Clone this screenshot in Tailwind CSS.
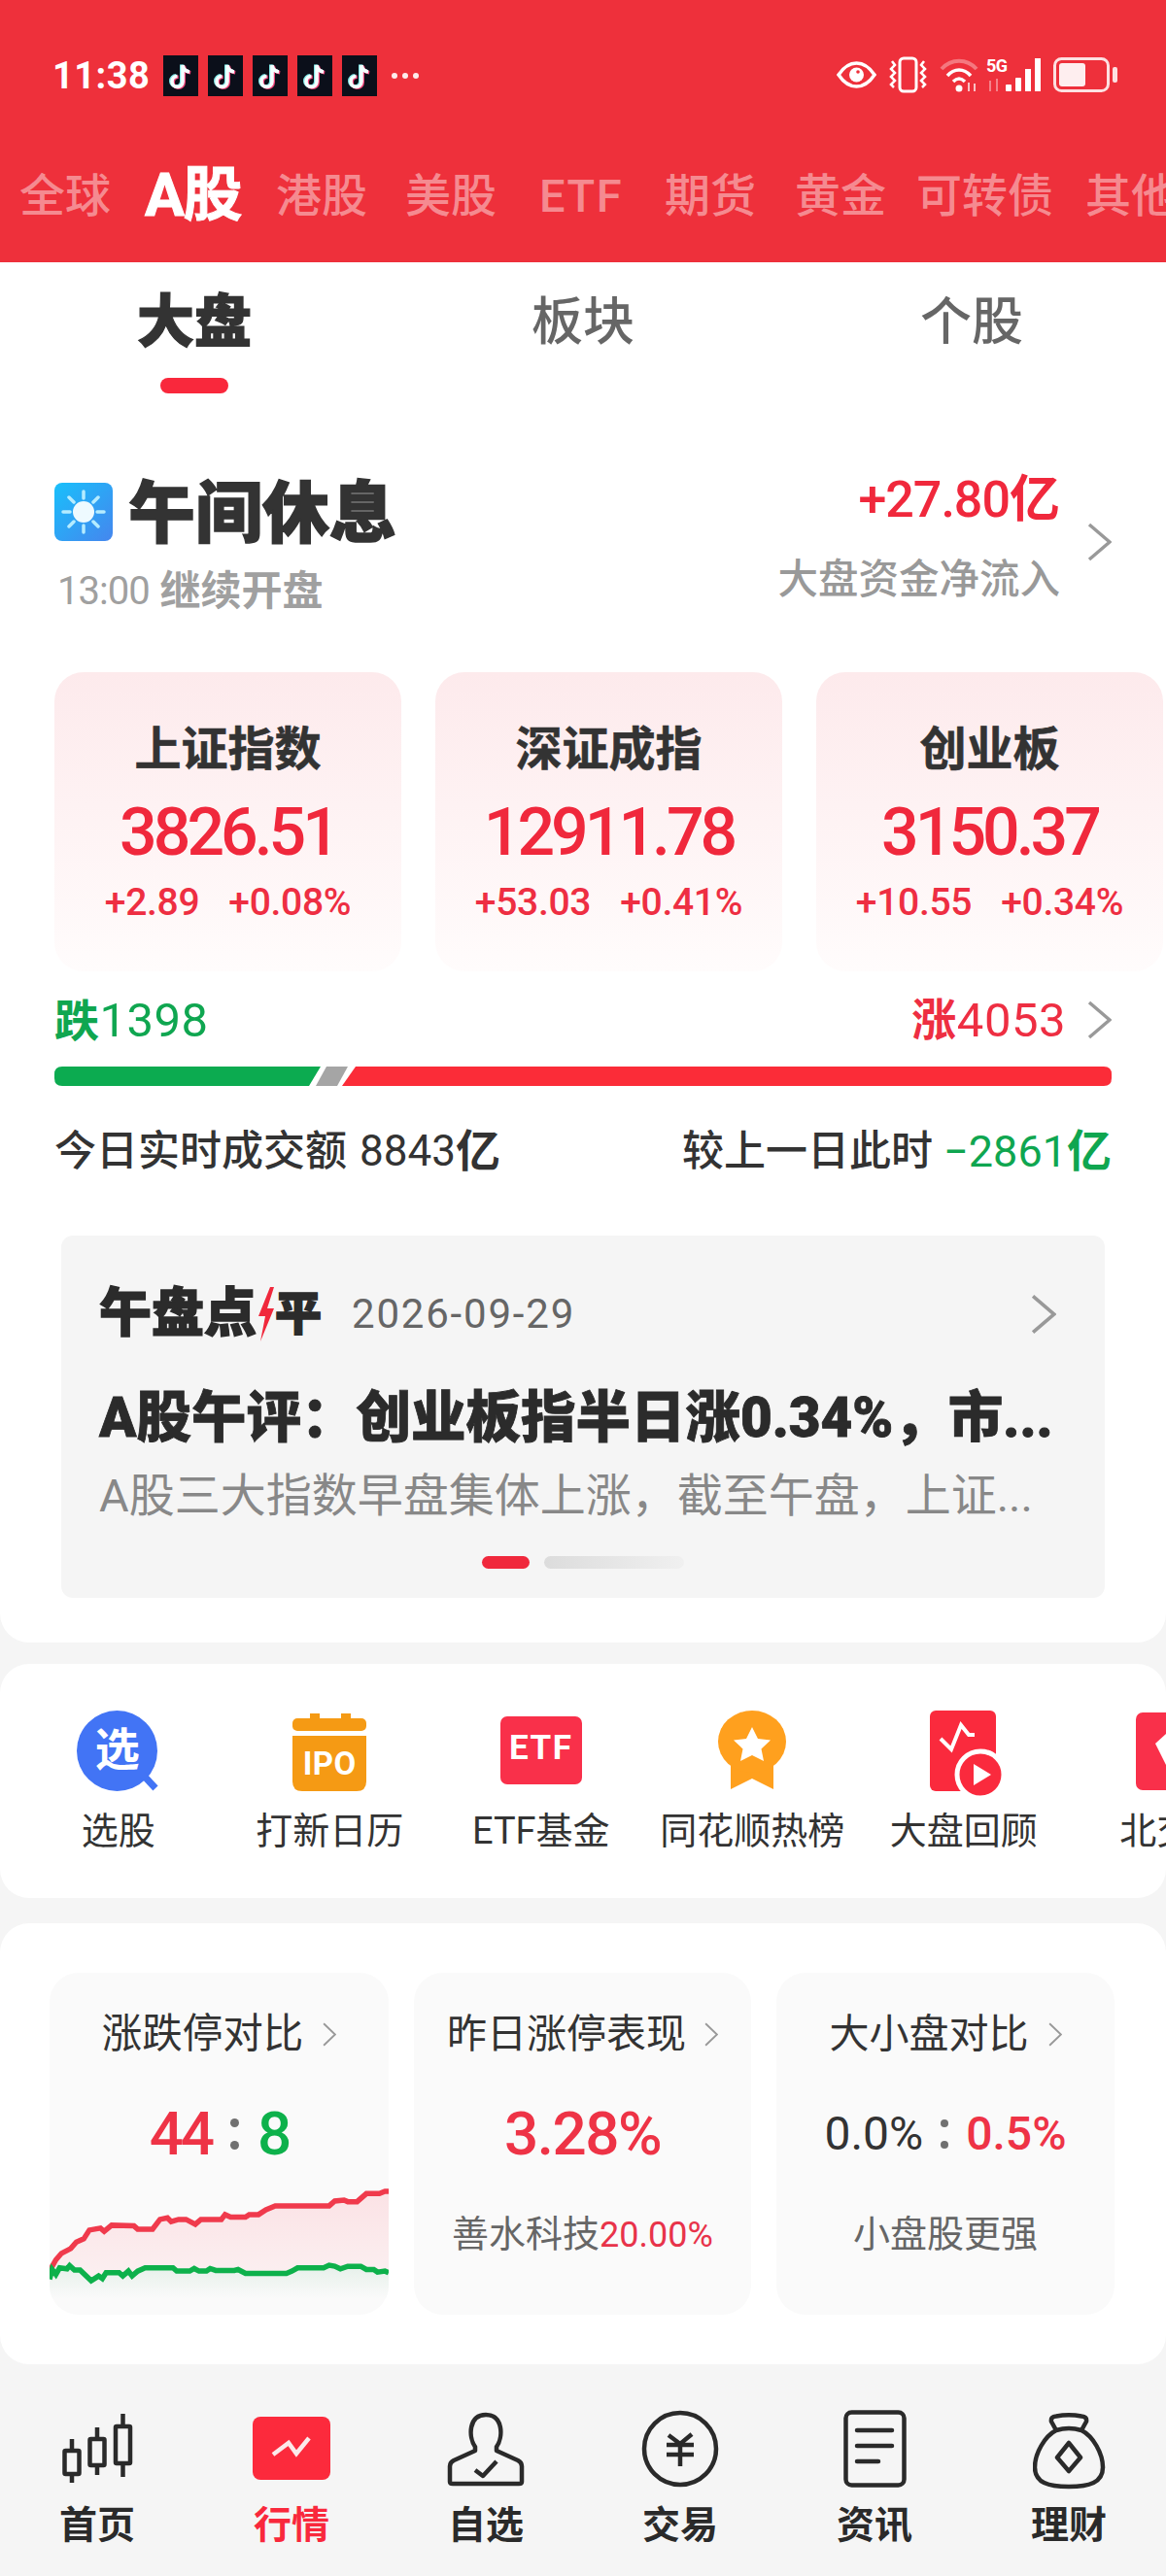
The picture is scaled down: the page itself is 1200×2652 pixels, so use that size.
<!DOCTYPE html>
<html lang="zh-CN">
<head>
<meta charset="UTF-8">
<title>行情</title>
<script src="https://cdn.jsdelivr.net/npm/@tailwindcss/browser@4"></script>
</head>
<body class="bg-[#f5f5f5]">
<svg class="hidden">
  <symbol id="tt" viewBox="0 0 36 42">
    <rect width="36" height="42" fill="#0b0f1a"/>
    <g fill="none" stroke-width="3.6">
      <path transform="translate(-1.2 -.6)" d="M20 10V27a5.5 5.5 0 1 1-5.5-5.5M20 10c.5 4 3 6.500 7 7" stroke="#7fe6e6"/>
      <path transform="translate(1.200 .8)" d="M20 10V27a5.500 5.500 0 1 1-5.500-5.500M20 10c.5 4 3 6.500 7 7" stroke="#f0447a"/>
      <path d="M20 10V27a5.500 5.500 0 1 1-5.500-5.500M20 10c.5 4 3 6.500 7 7" stroke="#f4ffff"/>
    </g>
  </symbol>
  <symbol id="chev" viewBox="0 0 25 40"><path d="M2 2 23 20 2 38" fill="none" stroke="#999" stroke-width="3.500"/></symbol>
</svg>

<div class="w-[1200px] h-[2652px] overflow-hidden font-['Roboto','Noto_Sans_CJK_SC',sans-serif] text-[#333]">

  <!-- red header -->
  <header class="h-[270px] bg-[#ee303b] overflow-hidden">
    <div class="h-[173px] flex pt-[57px] pl-[54px] pr-[50px] justify-between items-start">
      <div class="flex items-center h-[42px] text-white">
        <span class="text-[38px] font-bold leading-none w-[114px] tracking-[.5px]">11:38</span>
        <div class="flex gap-[10px]">
          <svg class="w-[36px] h-[42px]"><use href="#tt"/></svg>
          <svg class="w-[36px] h-[42px]"><use href="#tt"/></svg>
          <svg class="w-[36px] h-[42px]"><use href="#tt"/></svg>
          <svg class="w-[36px] h-[42px]"><use href="#tt"/></svg>
          <svg class="w-[36px] h-[42px]"><use href="#tt"/></svg>
        </div>
        <div class="flex gap-[5px] ml-[15px]">
          <span class="w-[6px] h-[6px] rounded-full bg-white/90"></span>
          <span class="w-[6px] h-[6px] rounded-full bg-white/90"></span>
          <span class="w-[6px] h-[6px] rounded-full bg-white/90"></span>
        </div>
      </div>
      <div class="flex items-center h-[38px] mt-[1px]">
        <svg class="w-[41px] h-[28px]" viewBox="0 0 41 28">
          <path d="M2 14C8 5 14 2 20.500 2S33 5 39 14C33 23 27 26 20.500 26S8 23 2 14Z" fill="none" stroke="#fff" stroke-width="3.500"/>
          <circle cx="20.500" cy="14" r="7.500" fill="#fff"/>
          <circle cx="22" cy="11" r="1.800" fill="#ee303b"/>
        </svg>
        <svg class="w-[42px] h-[38px] ml-[12px]" viewBox="0 0 42 38" fill="none" stroke="#fff" stroke-width="2.500">
          <rect x="12" y="2" width="17" height="34" rx="4" stroke-width="3"/>
          <path d="M4 5l3 4-4 4 4 4-4 4 4 4-4 4 3 3M37 5l-3 4 4 4-4 4 4 4-4 4 4 4-3 3"/>
        </svg>
        <svg class="w-[40px] h-[36px] ml-[11px]" viewBox="0 0 40 36" fill="none">
          <path d="M2 12C12 1 28 1 38 12" stroke="#fff" stroke-opacity=".35" stroke-width="4"/>
          <path d="M8 19C15 11 25 11 32 19M14 25c4-4 8-4 12 0" stroke="#fff" stroke-width="3.500"/>
          <circle cx="20" cy="32" r="3.500" fill="#fff"/>
          <path d="M30 26v9M36 27v8" stroke="#fff" stroke-opacity=".7" stroke-width="2"/>
        </svg>
        <div class="relative w-[64px] h-[36px] ml-[8px]">
          <span class="absolute left-0 top-0 text-[18px] font-bold leading-none text-white tracking-[-.5px]">5G</span>
          <svg class="absolute left-0 top-0 w-[64px] h-[36px]" viewBox="0 0 64 36" fill="#fff">
            <path d="M4 24v11M11 22v13" stroke="#fff" stroke-opacity=".4" stroke-width="2"/>
            <rect x="20" y="28" width="6" height="7" rx="1"/><rect x="30" y="21" width="6" height="14" rx="1"/><rect x="40" y="12" width="6" height="23"/><rect x="50" y="1" width="6" height="34"/>
          </svg>
        </div>
        <svg class="w-[66px] h-[36px] ml-[5px]" viewBox="0 0 66 36">
          <rect x="1.500" y="1.500" width="55" height="33" rx="7" fill="none" stroke="#fff" stroke-opacity=".85" stroke-width="3"/>
          <rect x="6" y="6" width="27" height="24" rx="3" fill="#fff" fill-opacity=".92"/>
          <rect x="61" y="10" width="5" height="16" rx="2" fill="#fff" fill-opacity=".85"/>
        </svg>
      </div>
    </div>
    <nav class="flex items-center h-[58px] pl-[20px] whitespace-nowrap text-[47px] font-medium leading-none text-white/45 -mt-[1px]">
      <span>全球</span>
      <span class="ml-[35px] text-[61px] font-bold text-white tracking-[-1.500px] [-webkit-text-stroke:1px_#fff]">A股</span>
      <span class="ml-[36px]">港股</span>
      <span class="ml-[39px]">美股</span>
      <span class="ml-[44px] tracking-[1.500px]">ETF</span>
      <span class="ml-[43px]">期货</span>
      <span class="ml-[40px]">黄金</span>
      <span class="ml-[31px]">可转债</span>
      <span class="ml-[33px]">其他</span>
    </nav>
  </header>

  <!-- market overview -->
  <main class="h-[1421px] bg-white rounded-b-[30px]">
    <div class="grid grid-cols-3 h-[135px] pt-[33px]">
      <div class="flex flex-col items-center">
        <span class="text-[59px] font-black leading-[58px] [-webkit-text-stroke:1.200px_#333]">大盘</span>
        <span class="w-[70px] h-[16px] rounded-full bg-[#f9283c] mt-[28px]"></span>
      </div>
      <div class="text-center text-[53px] font-medium leading-[58px] text-[#666]">板块</div>
      <div class="text-center text-[53px] font-medium leading-[58px] text-[#666]">个股</div>
    </div>

    <section class="px-[56px]">
      <div class="flex justify-between pt-[84px] h-[287px]">
        <div>
          <div class="flex items-center h-[70px] mt-[5px]">
            <svg class="w-[60px] h-[60px] -mt-[5px]" viewBox="0 0 60 60">
              <defs><linearGradient id="sky" x1="0" y1="0" x2="1" y2="1"><stop offset="0" stop-color="#19c0fb"/><stop offset="1" stop-color="#4586ee"/></linearGradient></defs>
              <rect width="60" height="60" rx="8" fill="url(#sky)"/>
              <circle cx="30" cy="30" r="11" fill="#eefaff"/>
              <path d="M30 9v7M30 44v7M9 30h7M44 30h7M15 15l5 5M40 40l5 5M45 15l-5 5M20 40l-5 5" stroke="#b5ecff" stroke-width="3.500" stroke-linecap="round"/>
            </svg>
            <span class="ml-[16px] text-[69px] font-black leading-none [-webkit-text-stroke:1.500px_#333]">午间休息</span>
          </div>
          <div class="flex items-center h-[40px] mt-[25px] pl-[3px] text-[#a0a0a0]">
            <span class="text-[40px] leading-none tracking-[-1px]">13:00</span>
            <span class="ml-[11px] text-[42px] font-bold leading-none">继续开盘</span>
          </div>
        </div>
        <div class="flex h-[135px]">
          <div class="text-right -mt-[2px]">
            <div class="text-[#f0283c] text-[52px] font-medium leading-[56px] tracking-[-1px]">+27.80<span class="font-bold tracking-normal">亿</span></div>
            <div class="text-[#999] text-[41.5px] font-medium leading-[44px] mt-[32px]">大盘资金净流入</div>
          </div>
          <svg class="w-[25px] h-[40px] ml-[28px] self-center mb-[-3px]"><use href="#chev"/></svg>
        </div>
      </div>

      <div class="flex gap-[35px] w-[1141px]">
        <div class="w-[357px] h-[308px] rounded-[30px] bg-gradient-to-b from-[#fdeaec] to-[#fffcfc] text-center pt-[52px]">
          <div class="text-[48px] font-bold leading-[56px] [-webkit-text-stroke:.6px_#333]">上证指数</div>
          <div class="text-[68px] font-medium text-[#f0283c] leading-[72px] mt-[21px] tracking-[-4px]">3826.51</div>
          <div class="flex justify-center gap-[30px] text-[39px] font-medium text-[#ee2e42] leading-[40px] mt-[16px] tracking-[-.3px]"><span>+2.89</span><span>+0.08%</span></div>
        </div>
        <div class="w-[357px] h-[308px] rounded-[30px] bg-gradient-to-b from-[#fdeaec] to-[#fffcfc] text-center pt-[52px]">
          <div class="text-[48px] font-bold leading-[56px] [-webkit-text-stroke:.6px_#333]">深证成指</div>
          <div class="text-[68px] font-medium text-[#f0283c] leading-[72px] mt-[21px] tracking-[-4px]">12911.78</div>
          <div class="flex justify-center gap-[30px] text-[39px] font-medium text-[#ee2e42] leading-[40px] mt-[16px] tracking-[-.3px]"><span>+53.03</span><span>+0.41%</span></div>
        </div>
        <div class="w-[357px] h-[308px] rounded-[30px] bg-gradient-to-b from-[#fdeaec] to-[#fffcfc] text-center pt-[52px]">
          <div class="text-[48px] font-bold leading-[56px] [-webkit-text-stroke:.6px_#333]">创业板</div>
          <div class="text-[68px] font-medium text-[#f0283c] leading-[72px] mt-[21px] tracking-[-4px]">3150.37</div>
          <div class="flex justify-center gap-[30px] text-[39px] font-medium text-[#ee2e42] leading-[40px] mt-[16px] tracking-[-.3px]"><span>+10.55</span><span>+0.34%</span></div>
        </div>
      </div>

      <div class="flex justify-between items-center h-[44px] mt-[28px]">
        <div class="text-[#0fa650] text-[49px] leading-none tracking-[.5px]"><span class="font-bold text-[46px]">跌</span>1398</div>
        <div class="flex items-center text-[#ee2e42] text-[49px] leading-none tracking-[.5px]"><span class="font-bold text-[46px]">涨</span>4053<svg class="w-[25px] h-[40px] ml-[22px]"><use href="#chev"/></svg></div>
      </div>
      <svg class="block w-[1088px] h-[20px] mt-[26px]" viewBox="0 0 1088 20">
        <path d="M8 0H274L262 20H8Q0 20 0 12V8Q0 0 8 0Z" fill="#0cab50"/>
        <path d="M280 0H302L291 20H269Z" fill="#a5a5a5"/>
        <path d="M310 0H1080Q1088 0 1088 8V12Q1088 20 1080 20H296Z" fill="#fb2c38"/>
      </svg>

      <div class="flex justify-between items-center h-[44px] mt-[45px] text-[43px] font-medium leading-none">
        <div class="flex items-center">今日实时成交额<span class="ml-[13px] text-[44px] font-normal">8843</span><span class="font-bold text-[46px]">亿</span></div>
        <div class="flex items-center">较上一日此时<span class="ml-[11px] text-[#0fa650] text-[45px] font-normal">−2861</span><span class="font-bold text-[46px] text-[#0fa650]">亿</span></div>
      </div>

      <div class="w-[1074px] h-[373px] ml-[7px] mt-[65px] rounded-[12px] bg-[#f5f5f5] px-[39px] pt-[51px]">
        <div class="flex items-center h-[60px]">
          <div class="flex items-center w-[260px] font-black text-[54px] leading-none text-[#2b2b2b] [-webkit-text-stroke:1.500px_#2b2b2b]">
            <span>午盘点</span>
            <svg class="w-[20px] h-[58px] shrink-0" viewBox="0 0 20 58"><path d="M14 1 2 31h7L4 57 18 23h-7L18 1Z" fill="#f0283c"/></svg>
            <span class="-ml-[1px] text-[48px]">平</span>
          </div>
          <span class="text-[#666] text-[42px] tracking-[1.800px] leading-none">2026-09-29</span>
          <svg class="w-[26px] h-[46px] ml-auto mr-[11px]" viewBox="0 0 25 40"><use href="#chev"/></svg>
        </div>
        <div class="mt-[47px] text-[56.5px] font-black leading-[60px] whitespace-nowrap text-[#2b2b2b] [-webkit-text-stroke:.8px_#2b2b2b]">A股午评：创业板指半日涨0.34%，市...</div>
        <div class="mt-[22px] text-[47px] leading-[56px] whitespace-nowrap text-[#888]">A股三大指数早盘集体上涨，截至午盘，上证...</div>
        <div class="flex justify-center gap-[15px] mt-[34px]">
          <span class="w-[49px] h-[13px] rounded-full bg-[#f0283c]"></span>
          <span class="w-[144px] h-[13px] rounded-full bg-gradient-to-r from-[#dcdcdc] to-[#f0f0f0]"></span>
        </div>
      </div>
    </section>
  </main>

  <!-- shortcut strip -->
  <section class="mt-[22px] h-[241px] bg-white rounded-[30px] pt-[48px] overflow-hidden">
    <div class="flex w-[1400px] pl-[13px]">
      <div class="w-[217.500px] flex flex-col items-center">
        <div class="h-[90px]">
          <div class="relative w-[85px] h-[85px]">
            <div class="absolute left-0 top-0 w-[83px] h-[83px] rounded-full bg-[#4274f5] text-white text-[46px] font-bold leading-[80px] text-center">选</div>
            <svg class="absolute left-0 top-0 w-[85px] h-[85px]" viewBox="0 0 85 85"><path d="M68 66 81 80" stroke="#4274f5" stroke-width="7"/></svg>
          </div>
        </div>
        <div class="mt-[11px] text-[38px] leading-[46px]">选股</div>
      </div>
      <div class="w-[217.500px] flex flex-col items-center">
        <div class="relative h-[90px]">
          <svg class="w-[76px] h-[80px] mt-[3px]" viewBox="0 0 76 80" fill="#f59a14">
            <path d="M18 0h10v5H18zM50 0h10v5H50z"/><rect y="5" width="76" height="13" rx="5"/><path d="M0 23H76V70Q76 80 66 80H10Q0 80 0 70Z"/>
          </svg>
          <span class="absolute left-0 right-0 top-[37px] text-center text-white text-[33px] font-bold leading-[36px] tracking-[.5px]">IPO</span>
        </div>
        <div class="mt-[11px] text-[38px] leading-[46px]">打新日历</div>
      </div>
      <div class="w-[217.500px] flex flex-col items-center">
        <div class="h-[90px]">
          <div class="w-[84px] h-[70px] mt-[6px] rounded-[7px] bg-[#f9304a] text-white text-[35px] font-bold leading-[66px] text-center tracking-[1.500px]">ETF</div>
        </div>
        <div class="mt-[11px] text-[38px] leading-[46px]">ETF基金</div>
      </div>
      <div class="w-[217.500px] flex flex-col items-center">
        <div class="h-[90px]">
          <svg class="w-[70px] h-[82px]" viewBox="0 0 70 82" fill="#ffa01e">
            <path d="M13 50V81L35 70 57 81V50Z"/><ellipse cx="35" cy="32" rx="35" ry="32"/>
            <path d="M35 17l6 12 13 1.500-9.500 9 2.500 12.500L35 46l-12 6 2.500-12.500-9.500-9L29 29Z" fill="#fff"/>
          </svg>
        </div>
        <div class="mt-[11px] text-[38px] leading-[46px]">同花顺热榜</div>
      </div>
      <div class="w-[217.500px] flex flex-col items-center">
        <div class="h-[90px]">
          <svg class="w-[76px] h-[88px] ml-[6px]" viewBox="0 0 76 88">
            <rect width="68" height="83" rx="6" fill="#fa2a3d"/>
            <path d="M11 29 22 40 32 15 40 25H46" fill="none" stroke="#fff" stroke-width="4"/>
            <circle cx="52" cy="66" r="24" fill="#fa2a3d" stroke="#fff" stroke-width="5"/>
            <path d="M45 55 63 66 45 77Z" fill="#fff"/>
          </svg>
        </div>
        <div class="mt-[11px] text-[38px] leading-[46px]">大盘回顾</div>
      </div>
      <div class="w-[217.500px] flex flex-col items-center">
        <div class="h-[90px]">
          <svg class="w-[80px] h-[80px] mt-[2px]" viewBox="0 0 80 80">
            <rect width="80" height="80" rx="7" fill="#f9304a"/>
            <path d="M20 32 32 21 44 32 32 56Z" fill="#fff"/>
          </svg>
        </div>
        <div class="mt-[11px] text-[38px] leading-[46px]">北交所</div>
      </div>
    </div>
  </section>

  <!-- limit-up cards -->
  <section class="mt-[26px] h-[454px] bg-white rounded-[30px] pt-[51px] pl-[51px] flex gap-[26px]">
    <div class="relative w-[349px] h-[352px] rounded-[30px] bg-[#fafafa] overflow-hidden text-center">
      <div class="flex justify-center items-center gap-[20px] pt-[40px] text-[41.5px] leading-[46px]">涨跌停对比<svg class="w-[14px] h-[25px]" viewBox="0 0 25 40" preserveAspectRatio="none"><use href="#chev"/></svg></div>
      <div class="flex justify-center items-center gap-[19px] mt-[52px] h-[56px] text-[62px] font-medium leading-none tracking-[-3px]">
        <span class="text-[#ee3346]">44</span><span class="flex flex-col gap-[14px]"><i class="block w-[9px] h-[9px] rounded-full bg-[#707070]"></i><i class="block w-[9px] h-[9px] rounded-full bg-[#707070]"></i></span><span class="text-[#0db14b]">8</span>
      </div>
      <svg class="absolute left-0 bottom-0 w-[349px] h-[133px]" viewBox="133 780 912 400" preserveAspectRatio="none">
        <defs>
          <linearGradient id="redfill" x1="0" y1="0" x2="0" y2="1"><stop offset="0" stop-color="#fbe2e5"/><stop offset="1" stop-color="#fbf0f1"/></linearGradient>
          <linearGradient id="greenfill" x1="0" y1="0" x2="0" y2="1"><stop offset="0" stop-color="#e6f0ea"/><stop offset="1" stop-color="#fafafa"/></linearGradient>
        </defs>
        <path d="M133 1045 150 1010 165 990 190 975 205 955 225 945 240 918 270 912 280 922 300 903 360 905 370 915 410 915 430 885 450 880 460 892 480 885 500 885 525 900 540 885 595 885 605 870 620 878 660 878 670 870 695 870 715 855 740 843 885 843 900 828 925 825 935 830 960 830 985 805 1020 805 1035 798 1045 798V1050L1015 1048 985 1040 935 1030 885 1027 800 1035 770 1052 660 1052 630 1043 465 1035 390 1035 355 1060 320 1050 285 1050 245 1075 200 1042 140 1040Z" fill="url(#redfill)"/>
        <path d="M133 1070 140 1040 150 1055 160 1035 180 1038 187 1028 200 1042 215 1042 245 1075 265 1060 275 1068 285 1050 320 1050 330 1060 345 1045 355 1060 370 1045 390 1035 465 1035 475 1045 510 1045 522 1037 535 1045 555 1045 565 1037 580 1043 630 1043 640 1040 660 1052 770 1052 785 1045 800 1035 870 1035 885 1027 900 1030 915 1038 935 1030 970 1030 985 1040 1005 1040 1015 1048 1035 1045 1045 1050V1130H133Z" fill="url(#greenfill)"/>
        <path d="M133 1045 150 1010 165 990 190 975 205 955 225 945 240 918 270 912 280 922 300 903 360 905 370 915 410 915 430 885 450 880 460 892 480 885 500 885 525 900 540 885 595 885 605 870 620 878 660 878 670 870 695 870 715 855 740 843 885 843 900 828 925 825 935 830 960 830 985 805 1020 805 1035 798 1045 798" fill="none" stroke="#f03a4c" stroke-width="5.500" vector-effect="non-scaling-stroke"/>
        <path d="M133 1070 140 1040 150 1055 160 1035 180 1038 187 1028 200 1042 215 1042 245 1075 265 1060 275 1068 285 1050 320 1050 330 1060 345 1045 355 1060 370 1045 390 1035 465 1035 475 1045 510 1045 522 1037 535 1045 555 1045 565 1037 580 1043 630 1043 640 1040 660 1052 770 1052 785 1045 800 1035 870 1035 885 1027 900 1030 915 1038 935 1030 970 1030 985 1040 1005 1040 1015 1048 1035 1045 1045 1050" fill="none" stroke="#0db14b" stroke-width="5.500" vector-effect="non-scaling-stroke"/>
      </svg>
    </div>
    <div class="w-[347px] h-[352px] rounded-[30px] bg-[#fafafa] text-center">
      <div class="flex justify-center items-center gap-[19px] pt-[40px] text-[41px] leading-[46px]">昨日涨停表现<svg class="w-[14px] h-[25px]" viewBox="0 0 25 40" preserveAspectRatio="none"><use href="#chev"/></svg></div>
      <div class="mt-[52px] h-[56px] text-[62px] font-medium leading-[56px] text-[#ee3346] tracking-[-1.500px]">3.28%</div>
      <div class="mt-[52px] text-[38px] leading-[46px] text-[#666]">善水科技<span class="text-[#e8334a] text-[36px]">20.00%</span></div>
    </div>
    <div class="w-[348px] h-[352px] rounded-[30px] bg-[#fafafa] text-center">
      <div class="flex justify-center items-center gap-[20px] pt-[40px] text-[41px] leading-[46px]">大小盘对比<svg class="w-[14px] h-[25px]" viewBox="0 0 25 40" preserveAspectRatio="none"><use href="#chev"/></svg></div>
      <div class="flex justify-center items-center gap-[18px] mt-[52px] h-[56px] text-[48px] leading-none">
        <span>0.0%</span><span class="flex flex-col gap-[14px]"><i class="block w-[8px] h-[8px] rounded-full bg-[#707070]"></i><i class="block w-[8px] h-[8px] rounded-full bg-[#707070]"></i></span><span class="text-[#ee3346] font-medium">0.5%</span>
      </div>
      <div class="mt-[52px] text-[38px] leading-[46px] text-[#666]">小盘股更强</div>
    </div>
  </section>

  <!-- bottom nav -->
  <nav class="grid grid-cols-6 pt-[47px] text-[39px] font-bold leading-[46px] text-[#2a2a2a] text-center">
    <div class="flex flex-col items-center">
      <div class="h-[94px]">
        <svg class="w-[73px] h-[71px] mt-[4px]" viewBox="0 0 73 71" fill="none" stroke="#2a2a2a" stroke-width="4.500" stroke-linejoin="round">
          <rect x="2.500" y="38" width="15" height="24" rx="1"/><path d="M10 26V38M10 62V71"/>
          <rect x="28.500" y="26" width="15" height="27" rx="1"/><path d="M36 14V26M36 53V63"/>
          <rect x="55" y="13" width="15" height="38" rx="1"/><path d="M62.500 0V13M62.500 51V65"/>
        </svg>
      </div>
      <span class="mt-[2px]">首页</span>
    </div>
    <div class="flex flex-col items-center text-[#f9283c]">
      <div class="h-[94px]">
        <svg class="w-[80px] h-[65px] mt-[7px]" viewBox="0 0 80 65">
          <rect width="80" height="65" rx="8" fill="#fc2a3c"/>
          <path d="M21 39 37 27 45 38 58 22" fill="none" stroke="#fbe9ea" stroke-width="4.500"/>
        </svg>
      </div>
      <span class="mt-[2px]">行情</span>
    </div>
    <div class="flex flex-col items-center">
      <div class="h-[94px]">
        <svg class="w-[80px] h-[77px] mt-[2px]" viewBox="0 0 80 77" fill="none" stroke="#2a2a2a" stroke-width="4.500" stroke-linejoin="round">
          <path d="M29 36C22 26 22 3 40 3S58 26 51 36V40L73 50Q77 52 77 56V72Q77 74 74 74H6Q3 74 3 72V56Q3 52 7 50L29 40Z"/>
          <path d="M29 60 37 66 51 51"/>
        </svg>
      </div>
      <span class="mt-[2px]">自选</span>
    </div>
    <div class="flex flex-col items-center">
      <div class="h-[94px]">
        <svg class="w-[80px] h-[80px]" viewBox="0 0 80 80" fill="none" stroke="#2a2a2a" stroke-width="4.500">
          <circle cx="40" cy="40" r="37"/>
          <path d="M28 26 40 35 52 25M26 36H54M26 46H54M40 35V58"/>
        </svg>
      </div>
      <span class="mt-[2px]">交易</span>
    </div>
    <div class="flex flex-col items-center">
      <div class="h-[94px]">
        <svg class="w-[65px] h-[80px]" viewBox="0 0 65 80" fill="none" stroke="#2a2a2a" stroke-width="4.500">
          <rect x="2.500" y="2.500" width="60" height="75" rx="6"/>
          <path d="M14 21H50M14 37H50M14 53H36" stroke-linecap="round"/>
        </svg>
      </div>
      <span class="mt-[2px]">资讯</span>
    </div>
    <div class="flex flex-col items-center">
      <div class="h-[94px]">
        <svg class="w-[75px] h-[79px] mt-[3px]" viewBox="0 0 75 79" fill="none" stroke="#2a2a2a" stroke-width="4.500" stroke-linejoin="round">
          <path d="M24 18 19 9Q18 4 24 3.500 37 1 50 3.500 56 4 55 9L50 18"/>
          <path d="M24 18Q37 14 50 18C62 24 72 42 72 56 72 72 58 76 37 76S2 72 2 56C2 42 12 24 24 18Z"/>
          <path d="M37 31 49 46 37 60 25 46Z"/>
        </svg>
      </div>
      <span class="mt-[2px]">理财</span>
    </div>
  </nav>
</div>
</body>
</html>
